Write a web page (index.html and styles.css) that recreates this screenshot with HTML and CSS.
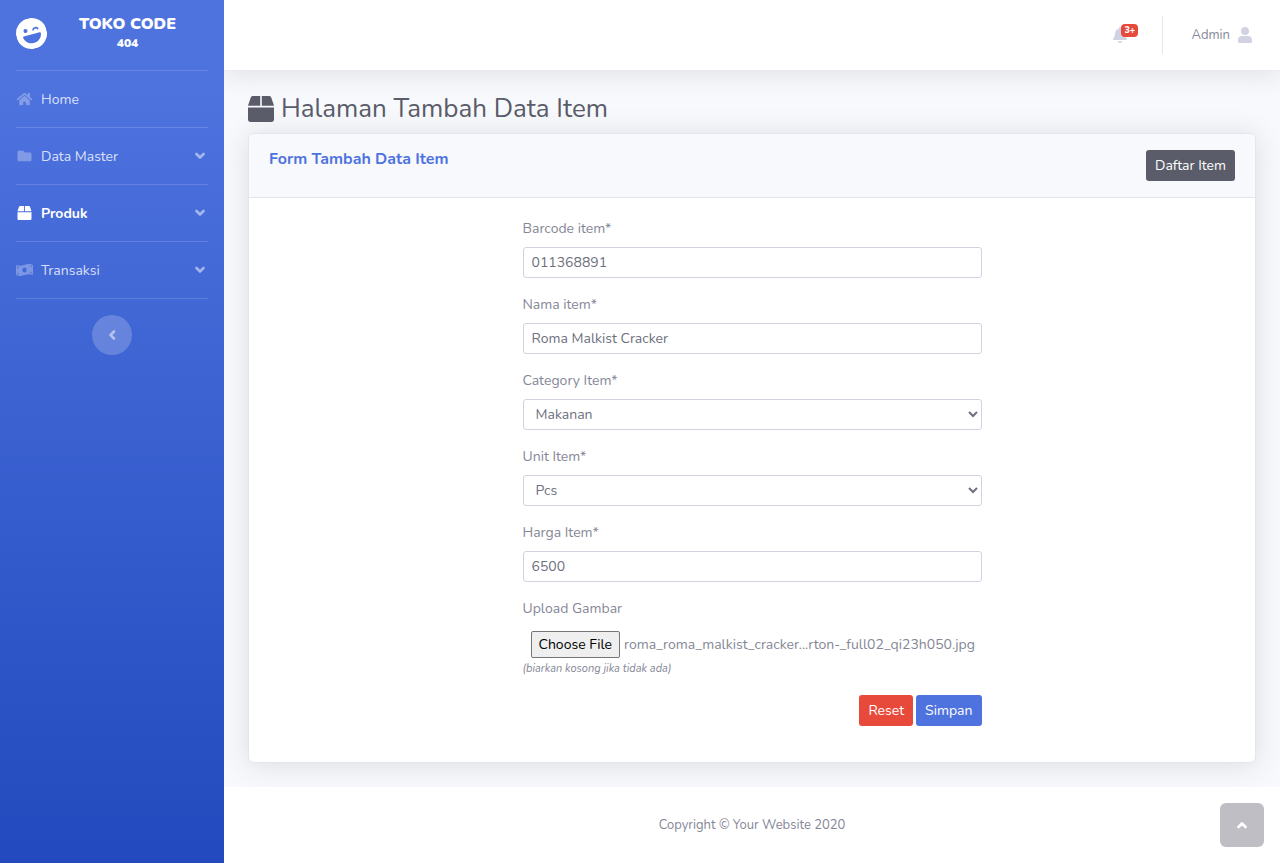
FILE: index.html
```html
<!DOCTYPE html>
<html lang="id">
<head>
<meta charset="utf-8">
<meta name="viewport" content="width=device-width, initial-scale=1">
<title>Halaman Tambah Data Item</title>
<link rel="stylesheet" href="styles.css">
</head>
<body>
<svg class="sprite" aria-hidden="true">
  <symbol id="box" viewBox="0 0 512 512"><path d="M509.500 184.600L458.900 32.800C452.400 13.200 434.100 0 413.400 0H272v192h238.700c-.4-2.500-.4-5-1.200-7.400zM240 0H98.600c-20.700 0-39 13.200-45.500 32.800L2.500 184.600c-.8 2.400-.8 4.900-1.200 7.400H240V0zM0 224v240c0 26.500 21.500 48 48 48h416c26.500 0 48-21.500 48-48V224H0z"/></symbol>
  <symbol id="angle" viewBox="0 0 10 14"><path d="M1.500 5 5 8.500 8.500 5" fill="none" stroke="currentColor" stroke-width="2.600" stroke-linecap="round" stroke-linejoin="round"/></symbol>
</svg>
<div class="wrapper">
  <nav class="sidebar" aria-label="Menu utama">
    <a class="brand" href="#">
      <svg class="brand-icon" viewBox="0 0 496 496" aria-hidden="true">
        <mask id="face"><rect width="496" height="496" fill="#fff"/><circle cx="166" cy="184" r="32" fill="#000"/><path d="M288 196c10-27 66-27 76 0" fill="none" stroke="#000" stroke-width="28" stroke-linecap="round"/><path fill="#000" d="M380 262H116c-9 0-16 8-15 17 9 70 68 125 140 125h14c72 0 131-55 140-125 1-9-6-17-15-17z"/></mask>
        <circle cx="248" cy="248" r="248" mask="url(#face)"/>
      </svg>
      <span class="brand-text">TOKO CODE <sup>404</sup></span>
    </a>
    <ul class="menu">
      <li><a class="menu-link" href="#">
        <svg class="menu-icon" viewBox="0 0 576 512" aria-hidden="true"><path d="M280.370 148.260L96 300.110V464a16 16 0 0 0 16 16l112.060-.29a16 16 0 0 0 15.920-16V368a16 16 0 0 1 16-16h64a16 16 0 0 1 16 16v95.640a16 16 0 0 0 16 16.050L464 480a16 16 0 0 0 16-16V300L295.670 148.260a12.190 12.190 0 0 0-15.300 0zM571.600 251.470L488 182.560V44.050a12 12 0 0 0-12-12h-56a12 12 0 0 0-12 12v72.610L318.470 43a48 48 0 0 0-61 0L4.340 251.470a12 12 0 0 0-1.600 16.900l25.500 31A12 12 0 0 0 45.150 301l235.220-193.740a12.190 12.190 0 0 1 15.300 0L530.900 301a12 12 0 0 0 16.900-1.600l25.500-31a12 12 0 0 0-1.700-16.930z"/></svg>
        <span>Home</span></a></li>
      <li><a class="menu-link" href="#">
        <svg class="menu-icon" viewBox="0 0 512 512" aria-hidden="true"><path d="M464 128H272l-64-64H48C21.490 64 0 85.490 0 112v288c0 26.510 21.490 48 48 48h416c26.510 0 48-21.490 48-48V176c0-26.510-21.490-48-48-48z"/></svg>
        <span>Data Master</span><svg class="caret" aria-hidden="true"><use href="#angle"/></svg></a></li>
      <li><a class="menu-link active" href="#" aria-current="page">
        <svg class="menu-icon" aria-hidden="true"><use href="#box"/></svg>
        <span>Produk</span><svg class="caret" aria-hidden="true"><use href="#angle"/></svg></a></li>
      <li><a class="menu-link" href="#">
        <svg class="menu-icon" viewBox="0 0 640 512" aria-hidden="true"><path d="M621.160 54.460C582.370 38.190 543.550 32 504.750 32c-123.170-.01-246.330 62.340-369.500 62.340-30.890 0-61.760-3.920-92.650-13.720-3.470-1.100-6.950-1.620-10.350-1.620C15.040 79 0 92.320 0 110.810v317.260c0 12.630 7.230 24.600 18.840 29.460C57.630 473.810 96.450 480 135.250 480c123.170 0 246.340-62.350 369.510-62.350 30.890 0 61.760 3.920 92.650 13.720 3.470 1.100 6.950 1.620 10.350 1.620 17.210 0 32.250-13.320 32.250-31.810V83.930c-.01-12.640-7.240-24.600-18.850-29.470zM48 132.220c20.120 5.040 41.120 7.570 62.720 8.930C104.840 170.540 79 192.690 48 192.690v-60.470zm0 285v-47.780c34.370 0 62.180 27.270 63.710 61.400-22.530-1.810-43.590-6.310-63.710-13.620zM320 352c-44.190 0-80-42.990-80-96 0-53.020 35.820-96 80-96s80 42.980 80 96c0 53.030-35.830 96-80 96zm272 27.780c-17.520-4.390-35.710-6.850-54.320-8.440 5.870-26.080 27.500-45.880 54.320-49.280v57.720zm0-236.110c-30.890-3.910-54.860-29.700-55.810-61.550 19.540 2.170 38.090 6.230 55.810 12.660v48.890z"/></svg>
        <span>Transaksi</span><svg class="caret" aria-hidden="true"><use href="#angle"/></svg></a></li>
    </ul>
    <button class="collapse" type="button" aria-label="Ciutkan menu"><svg class="caret left" aria-hidden="true"><use href="#angle"/></svg></button>
  </nav>

  <div class="page">
    <header class="topbar">
      <a class="alerts" href="#" aria-label="Notifikasi">
        <svg class="bell" viewBox="0 0 448 512" aria-hidden="true"><path d="M224 512c35.320 0 63.970-28.650 63.970-64H160.030c0 35.350 28.650 64 63.970 64zm215.390-149.710c-19.320-20.760-55.470-51.990-55.470-154.290 0-77.700-54.480-139.900-127.940-155.160V32c0-17.670-14.320-32-31.980-32s-31.980 14.330-31.980 32v20.840C118.560 68.100 64.080 130.300 64.080 208c0 102.300-36.150 133.530-55.470 154.290-6 6.450-8.660 14.160-8.610 21.710.11 16.400 12.980 32 32.100 32h383.800c19.120 0 32-15.600 32.100-32 .05-7.550-2.610-15.270-8.610-21.710z"/></svg>
        <span class="badge">3+</span>
      </a>
      <a class="account" href="#">
        <span>Admin</span>
        <svg class="avatar" viewBox="0 0 14 16" aria-hidden="true"><circle cx="7" cy="4" r="4"/><path d="M4 9h6a4 4 0 0 1 4 4v1.500a1.500 1.500 0 0 1-1.500 1.500h-11A1.500 1.500 0 0 1 0 14.500V13a4 4 0 0 1 4-4z"/></svg>
      </a>
    </header>

    <main class="content">
      <h1 class="title"><svg class="title-icon" aria-hidden="true"><use href="#box"/></svg>Halaman Tambah Data Item</h1>
      <section class="card">
        <div class="card-header">
          <h2 class="card-title">Form Tambah Data Item</h2>
          <a class="btn btn-secondary" href="#">Daftar Item</a>
        </div>
        <form class="form">
          <div class="field"><label for="barcode">Barcode item*</label><input class="control" id="barcode" type="text" value="011368891"></div>
          <div class="field"><label for="nama">Nama item*</label><input class="control" id="nama" type="text" value="Roma Malkist Cracker"></div>
          <div class="field"><label for="category">Category Item*</label><select class="control select" id="category"><option>Makanan</option></select></div>
          <div class="field"><label for="unit">Unit Item*</label><select class="control select" id="unit"><option>Pcs</option></select></div>
          <div class="field"><label for="harga">Harga Item*</label><input class="control" id="harga" type="text" value="6500"></div>
          <div class="field">
            <label for="gambar">Upload Gambar</label>
            <div class="upload">
              <input class="upload-input" id="gambar" type="file">
              <label class="upload-button" for="gambar">Choose File</label>
              <span class="upload-name">roma_roma_malkist_cracker...rton-_full02_qi23h050.jpg</span>
            </div>
            <small class="hint">(biarkan kosong jika tidak ada)</small>
          </div>
          <div class="actions"><button class="btn btn-danger" type="reset">Reset</button><button class="btn btn-primary" type="submit">Simpan</button></div>
        </form>
      </section>
    </main>

    <footer class="footer">Copyright © Your Website 2020</footer>
  </div>
</div>
<a class="to-top" href="#" aria-label="Kembali ke atas"><svg class="caret up" aria-hidden="true"><use href="#angle"/></svg></a>
</body>
</html>
```
FILE: styles.css
```css
*, *::before, *::after { box-sizing: border-box; }

body {
  margin: 0;
  font-family: Nunito, "Noto Sans", "Open Sans", sans-serif;
  font-size: 14px;
  line-height: 21px;
  color: #858796;
  background: #fff;
}

a { color: inherit; text-decoration: none; }
button, input, select { font: inherit; }
svg { fill: currentColor; flex: none; }
.sprite { position: absolute; width: 0; height: 0; }

.wrapper { display: flex; min-height: 100vh; }

.sidebar {
  display: flex;
  flex-direction: column;
  flex: none;
  width: 224px;
  padding: 0 16px;
  color: #fff;
  background: linear-gradient(180deg, #4e73df 10%, #224abe 100%);
}

.brand {
  display: flex;
  align-items: center;
  height: 71px;
  padding-bottom: 3px;
  border-bottom: 1px solid rgba(255, 255, 255, .15);
}
.brand-icon { width: 31px; height: 31px; transform: rotate(-15deg); }
.brand-text {
  flex: 1;
  font-size: 16px;
  font-weight: 900;
  line-height: 18px;
  text-align: center;
}
.brand-text sup { display: block; font-size: 12px; line-height: 20px; }

.menu { margin: 0; padding: 0; list-style: none; }
.menu li { border-bottom: 1px solid rgba(255, 255, 255, .15); }
.menu-link {
  display: flex;
  align-items: center;
  gap: 8px;
  height: 56px;
  color: rgba(255, 255, 255, .8);
}
.menu-icon { width: 17px; height: 14px; color: rgba(255, 255, 255, .3); }
.menu-link.active { font-weight: 700; color: #fff; }
.active .menu-icon { color: #fff; }
.caret { width: 10px; height: 14px; color: rgba(255, 255, 255, .5); }
.menu-link .caret { margin: 0 3px 0 auto; }

.collapse {
  display: grid;
  place-items: center;
  align-self: center;
  width: 40px;
  height: 40px;
  margin-top: 16px;
  padding: 0;
  border: 0;
  border-radius: 50%;
  background: rgba(255, 255, 255, .2);
}
.left { transform: rotate(90deg); }
.up { transform: rotate(180deg); color: #fff; }

.page {
  display: flex;
  flex: 1;
  flex-direction: column;
  min-width: 0;
  overflow: hidden;
  background: #f8f9fc;
}

.topbar {
  display: flex;
  align-items: center;
  justify-content: flex-end;
  height: 70px;
  padding: 0 28px;
  background: #fff;
  box-shadow: 0 2px 28px rgba(58, 59, 69, .15);
}
.alerts { position: relative; padding-right: 35px; color: #d1d3e2; }
.bell { display: block; width: 14px; height: 16px; }
.badge {
  position: absolute;
  top: -3px;
  left: 8px;
  padding: 0 3px;
  border-radius: 4px;
  font-size: 9px;
  font-weight: 800;
  line-height: 13px;
  color: #fff;
  background: #e74a3b;
}
.account {
  display: flex;
  align-items: center;
  gap: 8px;
  height: 38px;
  padding-left: 28px;
  border-left: 1px solid #e3e6f0;
  font-size: 13px;
}
.avatar { width: 14px; height: 16px; color: #d1d3e2; }

.content { flex: 1; padding: 22px 24px 24px; }

.title {
  display: flex;
  align-items: center;
  gap: 7px;
  margin: 0 0 7px;
  font-size: 26px;
  font-weight: 400;
  line-height: 34px;
  color: #5a5c69;
}
.title-icon { width: 26px; height: 26px; }

.card {
  border: 1px solid #e3e6f0;
  border-radius: 6px;
  background: #fff;
  box-shadow: 0 2px 28px rgba(58, 59, 69, .15);
}
.card-header {
  display: flex;
  align-items: flex-start;
  justify-content: space-between;
  padding: 16px 20px;
  border-bottom: 1px solid #e3e6f0;
  border-radius: 5px 5px 0 0;
  background: #f8f9fc;
}
.card-title { margin: 0; font-size: 16px; font-weight: 700; line-height: 18px; color: #4e73df; }

.btn {
  display: inline-block;
  padding: 4px 8px;
  border: 1px solid transparent;
  border-radius: 3px;
  color: #fff;
  cursor: pointer;
}
.btn-secondary { background: #5a5c69; }
.btn-danger { background: #e74a3b; }
.btn-primary { background: #4e73df; }

.form {
  display: flex;
  flex-direction: column;
  gap: 16px;
  width: calc(50% - 44px);
  margin: 0 auto;
  padding: 20px 0 36px;
}
.field { display: flex; flex-direction: column; gap: 8px; }
.control {
  width: 100%;
  height: 31px;
  padding: 4px 8px;
  border: 1px solid #d1d3e2;
  border-radius: 3px;
  color: #6e707e;
  background: #fff;
}

.upload { display: flex; align-items: center; gap: 4px; height: 31px; padding: 4px 8px 0; white-space: nowrap; }
.upload-input { position: absolute; width: 1px; height: 1px; opacity: 0; }
.upload-button {
  padding: 2px 7px;
  border: 1px solid #767676;
  border-radius: 2px;
  color: #000;
  background: #efefef;
}
.hint { margin-top: -8px; font-size: 11px; font-style: italic; }
.actions { display: flex; justify-content: flex-end; gap: 3px; }

.footer {
  padding: 28px 24px;
  font-size: 13px;
  line-height: 20px;
  text-align: center;
  background: #fff;
}

.to-top {
  position: fixed;
  right: 16px;
  bottom: 16px;
  display: grid;
  place-items: center;
  width: 44px;
  height: 44px;
  border-radius: 6px;
  background: #bfbec5;
}
```
